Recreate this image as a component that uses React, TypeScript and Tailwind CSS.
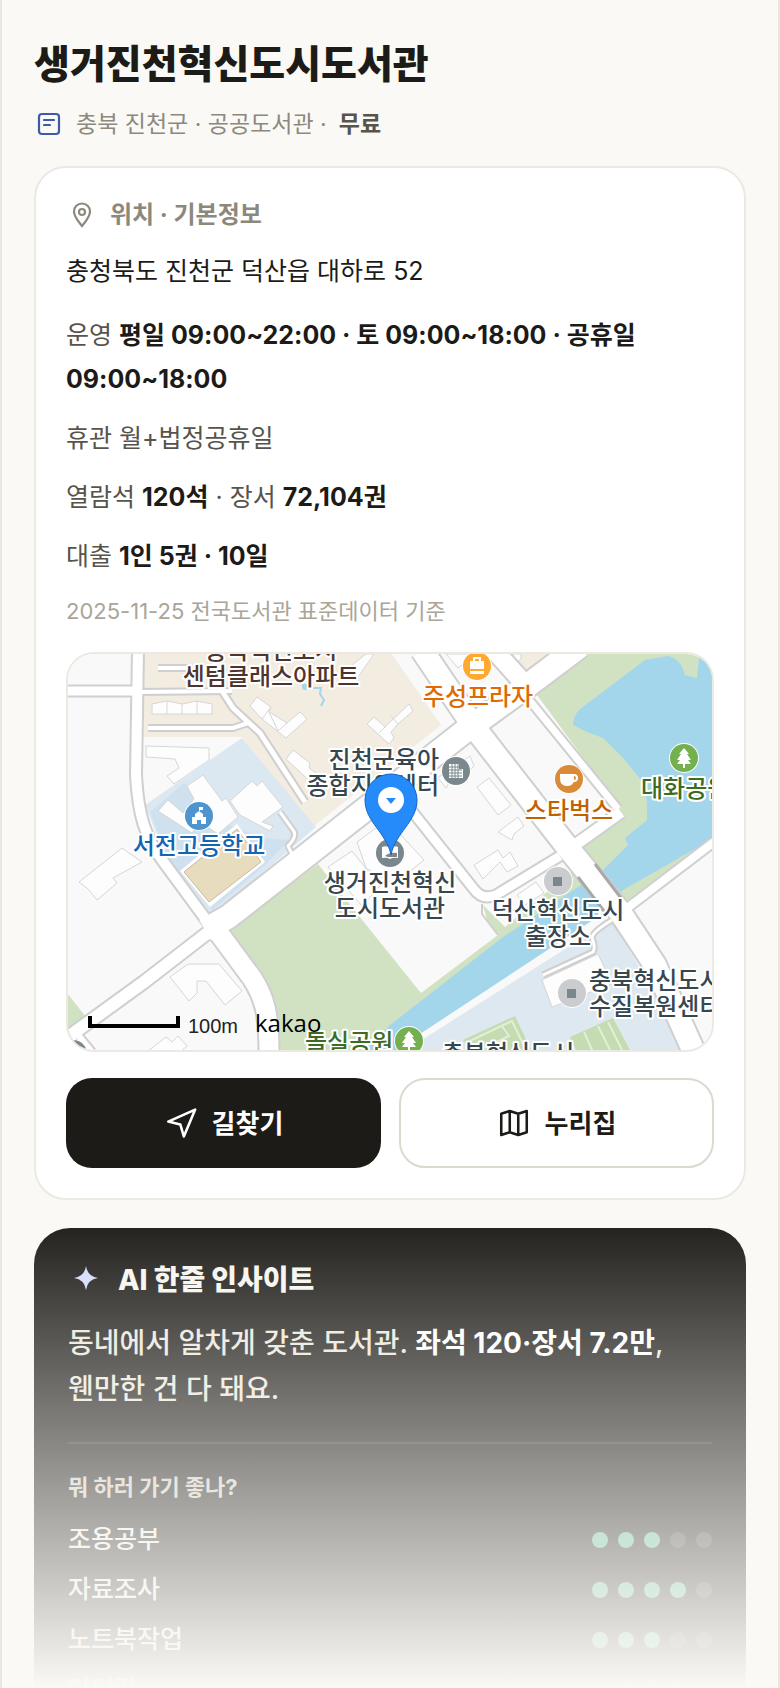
import type { ReactNode } from "react";

type Place = {
  lines: string[];
  x: number;
  y: number;
  color: string;
  anchor?: "start" | "middle" | "end";
};

type Score = {
  label: string;
  value: number;
};

const slate = "#37474f";

const places: Place[] = [
  { lines: ["충북혁신도시", "센텀클래스아파트"], x: 271, y: 659, color: "#4e342e" },
  { lines: ["주성프라자"], x: 478, y: 705, color: "#e06a00" },
  { lines: ["진천군육아", "종합지원센터"], x: 439, y: 768, color: slate, anchor: "end" },
  { lines: ["생거진천혁신", "도시도서관"], x: 390, y: 891, color: slate },
  { lines: ["서전고등학교"], x: 199, y: 854, color: "#1565b5" },
  { lines: ["스타벅스"], x: 569, y: 819, color: "#c26100" },
  { lines: ["대화공원"], x: 641, y: 797, color: "#3d6b22", anchor: "start" },
  { lines: ["덕산혁신도시", "출장소"], x: 558, y: 919, color: slate },
  { lines: ["충북혁신도시", "수질복원센터"], x: 589, y: 989, color: slate, anchor: "start" },
  { lines: ["돌실공원"], x: 305, y: 1051, color: "#3d6b22", anchor: "start" },
  { lines: ["충북혁신도시"], x: 508, y: 1062, color: slate },
];

const roads = [
  { d: "M210 931L144 982L60 1043", width: 12 },
  { d: "M205 930L228 917L465 731L527 686L580 646", width: 23 },
  { d: "M422 650L474 727L568 848L620 912L655 965L694 1052", width: 22 },
  { d: "M485 640L530 690", width: 18 },
  { d: "M138 650L136 775C138 815 145 838 165 864L210 925", width: 10 },
  { d: "M66 691H138", width: 9 },
  { d: "M138 692L232 691", width: 4 },
  { d: "M222 691L233 708L260 733L305 802", width: 5 },
  { d: "M148 728H233L248 723", width: 4 },
  { d: "M158 668H188", width: 4 },
  { d: "M218 932L252 978C265 998 269 1015 269 1052", width: 19 },
  { d: "M400 796L473 888Q482 901 496 895L560 856", width: 9 },
  { d: "M526 696L618 809", width: 7 },
  { d: "M568 850L621 812", width: 11 },
  { d: "M626 909L714 842", width: 8 },
  { d: "M543 975L593 952Q596 948 592 938Q592 932 612 920", width: 3 },
  { d: "M280 812L293 830Q298 836 288 846L293 856", width: 3 },
  { d: "M74 1030L92 1052", width: 6 },
];

const buildings = [
  "M152 704L167 701L182 704L197 701L212 704V714H152Z",
  "M250 706L257 697L271 707L269 712L287 723L300 712L307 719L286 738L262 719Z",
  "M286 759L293 750L310 763L309 768L322 778L315 786Z",
  "M367 724L374 717L385 727L409 704L413 711L398 724L391 732L394 738L389 744Z",
  "M340 675L352 665L366 654H374L351 687Z",
  "M146 746L209 748V760L174 784L167 776L179 768L175 759L146 757Z",
  "M187 786L203 775L222 801L226 798L238 817L218 834L200 822L192 833L158 811L168 800L183 813L194 799Z",
  "M230 801L252 781L257 786L262 781L283 807L262 822L273 826L270 831L240 815Z",
  "M79 882L122 848L142 862L113 878L117 883L97 900L88 889Z",
  "M170 977L188 964H219L242 991L225 1005L206 981H197V993L189 1001Z",
  "M147 1052L166 1037L172 1042L178 1036L187 1046L180 1052Z",
  "M357 842L387 820L424 860L394 884L366 868Z",
  "M328 867L352 851L380 886L362 906Z",
  "M477 787L489 778L511 805L498 815Z",
  "M498 832L518 817L524 826L514 834L512 840Z",
  "M474 865L498 850L503 858L510 852L518 866L507 872L500 862L483 879Z",
  "M517 895L536 882L544 893L525 905Z",
  "M438 778L444 773L450 781L446 788Z",
  "M464 760L470 756L474 766L468 772Z",
  "M446 654H472V657L458 668Z",
  "M508 661L514 665L521 659V654H506Z",
  "M542 980L552 1007L612 984L598 954Z",
];

const scores: Score[] = [
  { label: "조용공부", value: 3 },
  { label: "자료조사", value: 4 },
  { label: "노트북작업", value: 3 },
  { label: "아이랑", value: 4 },
];

function Marker({
  x,
  y,
  color,
  children,
}: {
  x: number;
  y: number;
  color: string;
  children?: ReactNode;
}) {
  return (
    <g transform={`translate(${x} ${y})`}>
      <circle r="15" fill="#fff" />
      <circle r="14" fill={color} />
      {children}
    </g>
  );
}

function Tree() {
  return (
    <path d="M0-10L5-4H3L7 2H4L7 6H1V10H-1V6H-7L-4 2H-7L-3-4H-5Z" fill="#fff" />
  );
}

function LibraryMap() {
  return (
    <svg
      viewBox="68 654 644 396"
      preserveAspectRatio="xMidYMid slice"
      className="block h-full w-full"
      role="img"
      aria-label="지도"
    >
      <rect x="0" y="600" width="800" height="500" fill="#f9f9f9" />

      {/* land use */}
      <path d="M143 650V737H242L313 827L441 725L389 650Z" fill="#f3ece0" />
      <path d="M496 650L517 677L556 650Z" fill="#f3ece0" />
      <path d="M242 738L316 827L212 917L166 858L145 805Z" fill="#dce8f1" />
      <path
        d="M150 812L184 783L202 795L230 825L262 838L290 840L262 868L212 910L168 858Z"
        fill="#cfe1ee"
      />
      <path d="M180 871L237 824L265 862L210 907Z" fill="#fff" />
      <path d="M184 872L237 829L261 862L209 902Z" fill="#e8dcbe" stroke="#cdb89c" />
      <path
        d="M318 864L228 930L260 970L277 1013L279 1052H390L503 940L590 880L578 866L505 927L483 905L487 920L498 935L421 993L363 921Z"
        fill="#d1e2c3"
      />
      <path
        d="M537 695L590 650H715V842L624 905L580 845L620 808Z"
        fill="#d1e2c3"
      />
      <path d="M60 984L86 1017L66 1032Z" fill="#d1e2c3" />
      <path
        d="M364 1052L390 1025L503 937L578 887L603 870L623 850L628 845L625 838L647 820V805L645 785L623 758L603 738L587 732L573 725Q573 716 580 709L645 660L667 656Q680 657 685 675L697 678L699 657L714 668V838L623 890L590 922L423 1032L394 1052Z"
        fill="#a4d6eb"
      />
      <path d="M403 1052L417 1043L603 925L613 923L637 963L684 1052Z" fill="#dde8f0" />
      <path d="M463 1040L515 1016L532 1052H470Z" fill="#c5dbb1" />
      <path d="M470 1041L512 1021L526 1050M502 1026L509 1036L484 1048" fill="none" stroke="#e3eed9" strokeWidth="2" />
      <path d="M570 1037L613 1018L631 1052H577Z" fill="#c5dbb1" />
      <path d="M584 1032L593 1052M598 1026L611 1052M608 1022L622 1050" fill="none" stroke="#e3eed9" strokeWidth="2" />
      <path d="M302 685Q308 684 311 688L321 688L320 694L324 700L321 706" fill="none" stroke="#a4d6eb" strokeWidth="2" />
      <circle cx="305" cy="687" r="3" fill="#a4d6eb" />

      {buildings.map((d) => (
        <path key={d} d={d} fill="#fdfdfd" stroke="#d6d6d6" />
      ))}
      <path
        d="M167 701V714M182 704V714M197 701V714M271 707L262 719M269 712L278 731M287 723L278 731M385 727L379 733M398 724L391 716"
        fill="none"
        stroke="#d6d6d6"
      />

      {/* roads: every casing first, then every surface, so junctions stay open */}
      {roads.map((road) => (
        <path
          key={road.d}
          d={road.d}
          fill="none"
          stroke="#cfcfcf"
          strokeWidth={road.width + 4}
          strokeLinejoin="round"
        />
      ))}
      {roads.map((road) => (
        <path
          key={road.d}
          d={road.d}
          fill="none"
          stroke="#fff"
          strokeWidth={road.width}
          strokeLinejoin="round"
        />
      ))}
      <path d="M482 904V914L498 935" fill="none" stroke="#cfcfcf" strokeWidth="2" />
      <path d="M595 864L621 898M578 877L604 911" fill="none" stroke="#a9a9a9" strokeWidth="3" />

      <Marker x={199} y={816} color="#4f93cf">
        <path d="M-7 8V1H-4V-2L0-5L4-2V1H7V8H2V4H-2V8ZM0-4V-9H4V-6H1" fill="#fff" />
      </Marker>
      <Marker x={477} y={666} color="#ffa931">
        <path d="M-7-5H7V3H-7ZM-7 5H7V8H-7Z" fill="#fff" />
        <path d="M-3-4V-8H3V-4" fill="none" stroke="#fff" strokeWidth="2" />
      </Marker>
      <Marker x={569} y={779} color="#d98b38">
        <path d="M-9-5H5V2Q4 7-2 7Q-9 7-9-1Z" fill="#fff" />
        <circle cx="5" cy="-1" r="3" fill="none" stroke="#fff" strokeWidth="2" />
      </Marker>
      <Marker x={456} y={771} color="#7a888e">
        <path d="M-7 7V-7H3V-2H7V7Z" fill="#fff" />
        <path d="M-4-7V7M-1-7V7M2-7V7M-7-4H3M-7-1H6M-7 2H6M-7 5H6" stroke="#7a888e" />
      </Marker>
      <Marker x={684} y={758} color="#74b04f">
        <Tree />
      </Marker>
      <Marker x={409} y={1041} color="#74b04f">
        <Tree />
      </Marker>
      <Marker x={558} y={881} color="#cbccd0">
        <rect x="-5" y="-4" width="9" height="9" fill="#7a888e" />
      </Marker>
      <Marker x={572} y={993} color="#cbccd0">
        <rect x="-5" y="-4" width="9" height="9" fill="#7a888e" />
      </Marker>
      <Marker x={390} y={853} color="#7a888e">
        <path d="M-8-6Q-3-8 0-5Q3-8 8-6V5Q3 4 0 6Q-3 4-8 5Z" fill="#fff" />
        <path d="M-5 3Q0-1 7 0V4H-2Z" fill="#333" opacity="0.6" />
      </Marker>
      <Marker x={73} y={1054} color="#7a888e" />

      {places.map((place, i) => (
        <text
          key={i}
          textAnchor={place.anchor ?? "middle"}
          className="text-[24px] font-medium"
          fill={place.color}
          stroke="#fff"
          strokeWidth="4"
          strokeLinejoin="round"
          paintOrder="stroke"
        >
          {place.lines.map((line, n) => (
            <tspan key={line} x={place.x} y={place.y + n * 26}>
              {line}
            </tspan>
          ))}
        </text>
      ))}

      <path
        d="M391 855C387 833 365 822 365 800A26 26 0 0 1 417 800C417 822 395 833 391 855Z"
        fill="#258bfb"
        stroke="#1764c4"
      />
      <circle cx="391" cy="800" r="13" fill="#fff" />
      <path d="M386 798H396L391 804Z" fill="#258bfb" />

      <path d="M90 1016V1026H178V1016" fill="none" stroke="#000" strokeWidth="4" />
      <text x="188" y="1033" fill="#222" className="font-['Liberation_Sans'] text-[20px]">
        100m
      </text>
      <text x="255" y="1032" className="font-['Open_Sans'] text-[24px]">
        kakao
      </text>
    </svg>
  );
}

function InfoRow({ children }: { children: ReactNode }) {
  return <p className="leading-[44px] text-[#57544b]">{children}</p>;
}

function Strong({ children }: { children: ReactNode }) {
  return <strong className="font-bold text-[#1d1b17]">{children}</strong>;
}

function ScoreRow({ label, value }: Score) {
  return (
    <li className="flex h-[50px] items-center justify-between text-[25px] font-medium text-[#f2f0ea]">
      {label}
      <span className="flex gap-[10px]">
        {[1, 2, 3, 4, 5].map((n) => (
          <span
            key={n}
            className={
              n <= value
                ? "size-4 rounded-full bg-[#5bb892]"
                : "size-4 rounded-full bg-white/15"
            }
          />
        ))}
      </span>
    </li>
  );
}

export default function App() {
  return (
    <main className="relative h-screen overflow-hidden border-x-2 border-[#e9e7e0] bg-[#faf9f5] px-8 pt-[38px] font-['Inter','Noto_Sans_CJK_KR',sans-serif] break-keep text-[#1d1b17]">
      <h1 className="text-[39px] leading-[52px] font-extrabold">생거진천혁신도시도서관</h1>
      <div className="mt-4 flex items-center gap-3 text-[23px] leading-9 text-[#8c887c]">
        <svg viewBox="0 0 30 30" className="size-[30px]" fill="none" stroke="#3f5aad" strokeWidth="2.200" strokeLinecap="round">
          <rect x="5" y="5" width="20" height="20" rx="3" />
          <path d="M10 11H20M10 16H16" />
        </svg>
        <p>
          충북 진천군 · 공공도서관 ·
          <strong className="ml-3 font-bold text-[#57544b]">무료</strong>
        </p>
      </div>

      <section className="mt-6 rounded-[32px] border-2 border-[#ebe9e1] bg-white px-[30px] pt-[29px] pb-[30px]">
        <h2 className="flex items-center gap-3 text-[24px] leading-9 font-bold text-[#8c887c]">
          <svg viewBox="0 0 32 32" className="size-8" fill="none" stroke="currentColor" strokeWidth="2.200">
            <path d="M16 27C13 23 8 18 8 12.500A8 8 0 0 1 24 12.500C24 18 19 23 16 27Z" />
            <circle cx="16" cy="13" r="3" />
          </svg>
          위치 · 기본정보
        </h2>
        <p className="mt-4 text-[25px] leading-[44px]">충청북도 진천군 덕산읍 대하로 52</p>
        <div className="mt-5 flex flex-col gap-[15px] text-[25px]">
          <InfoRow>
            운영 <Strong>평일 09:00~22:00 · 토 09:00~18:00 · 공휴일 09:00~18:00</Strong>
          </InfoRow>
          <InfoRow>휴관 월+법정공휴일</InfoRow>
          <InfoRow>
            열람석 <Strong>120석</Strong> · 장서 <Strong>72,104권</Strong>
          </InfoRow>
          <InfoRow>
            대출 <Strong>1인 5권 · 10일</Strong>
          </InfoRow>
          <p className="text-[22px] leading-9 text-[#a9a598]">2025-11-25 전국도서관 표준데이터 기준</p>
        </div>

        <div className="mt-[23px] h-[400px] overflow-hidden rounded-[28px] border-2 border-[#ebe9e1]">
          <LibraryMap />
        </div>

        <div className="mt-[26px] grid grid-cols-2 gap-[18px] text-[26px] font-bold">
          <a href="#directions" className="flex h-[90px] items-center justify-center gap-[14px] rounded-[26px] bg-[#1d1b17] text-white">
            <svg viewBox="0 0 24 24" className="size-[34px]" fill="none" stroke="currentColor" strokeWidth="1.800" strokeLinejoin="round">
              <path d="M3 11L22 2.500L14 21.500L11.500 13Z" />
            </svg>
            길찾기
          </a>
          <a href="#homepage" className="flex h-[90px] items-center justify-center gap-[14px] rounded-[26px] border-2 border-[#dcd9d0] bg-white">
            <svg viewBox="0 0 24 24" className="size-[34px]" fill="none" stroke="currentColor" strokeWidth="1.800" strokeLinejoin="round">
              <path d="M3 5.500L9 3.500L15 5.500L21 3.500V18.500L15 20.500L9 18.500L3 20.500ZM9 3.500V18.500M15 5.500V20.500" />
            </svg>
            누리집
          </a>
        </div>
      </section>

      <section className="mt-7 rounded-[36px] bg-[#1d1b17] px-[34px] pt-8 pb-9">
        <h2 className="flex items-center gap-[14px] text-[28px] leading-10 font-extrabold text-[#f7f5ef]">
          <svg viewBox="0 0 36 36" className="size-9" fill="#d3dcfb">
            <path d="M18 4Q19.500 14.500 30 16Q19.500 17.500 18 28Q16.500 17.500 6 16Q16.500 14.500 18 4Z" />
          </svg>
          AI 한줄 인사이트
        </h2>
        <p className="mt-5 text-[28px] leading-[46px] font-medium text-[#ebe8df]">
          동네에서 알차게 갖춘 도서관. <strong className="font-bold text-white">좌석 120·장서 7.2만</strong>, 웬만한 건 다 돼요.
        </p>
        <div className="mt-[30px] border-t-2 border-white/10 pt-[26px]">
          <h3 className="text-[22px] leading-[34px] font-bold text-[#d0cdc2]">뭐 하러 가기 좋나?</h3>
          <ul className="mt-[11px]">
            {scores.map((score) => (
              <ScoreRow key={score.label} {...score} />
            ))}
          </ul>
        </div>
      </section>

      <div className="pointer-events-none absolute -inset-x-0.5 bottom-0 h-[478px] bg-linear-to-b from-[#faf9f5]/0 to-[#faf9f5]" />
    </main>
  );
}
